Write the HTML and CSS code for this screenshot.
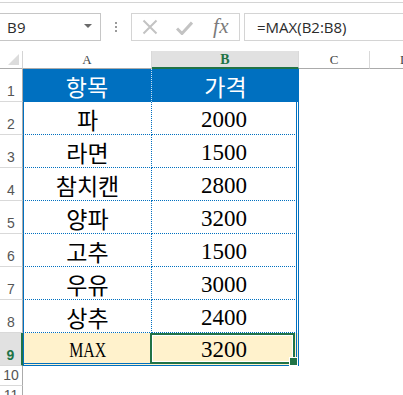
FILE: index.html
```html
<!DOCTYPE html>
<html lang="ko">
<head>
<meta charset="utf-8">
<title>Excel MAX</title>
<link rel="stylesheet" href="styles.css">
</head>
<body>
<div class="app">
  <div class="topbar"></div>
  <div class="formula-row">
    <div class="namebox"><span class="ref">B9</span><span class="caret"></span></div>
    <div class="grip"><i></i><i></i><i></i></div>
    <div class="fbuttons">
      <svg class="icon-x" width="16" height="16" viewBox="0 0 16 16"><path d="M1.5 1.5 L14.5 14.5 M14.5 1.5 L1.5 14.5" stroke="#c3c3c3" stroke-width="2" fill="none"/></svg>
      <svg class="icon-ok" width="17" height="14" viewBox="0 0 17 14"><path d="M1 7.5 L6 12.5 L16 1.5" stroke="#c3c3c3" stroke-width="3" fill="none"/></svg>
      <span class="fx">fx</span>
    </div>
    <div class="finput">=MAX(B2:B8)</div>
  </div>

  <div class="sheet">
    <div class="corner"><span class="tri"></span></div>
    <div class="ch">A</div>
    <div class="ch sel">B</div>
    <div class="ch">C</div>
    <div class="ch last">D</div>

    <div class="rh">1</div>
    <div class="c hd hda"><span class="kr">항목</span></div>
    <div class="c hd"><span class="kr">가격</span></div>
    <div class="c"></div><div class="c"></div>

    <div class="rh">2</div>
    <div class="c ta"><span class="kr">파</span></div>
    <div class="c tb"><span class="num">2000</span></div>
    <div class="c"></div><div class="c"></div>

    <div class="rh">3</div>
    <div class="c ta"><span class="kr">라면</span></div>
    <div class="c tb"><span class="num">1500</span></div>
    <div class="c"></div><div class="c"></div>

    <div class="rh">4</div>
    <div class="c ta"><span class="kr">참치캔</span></div>
    <div class="c tb"><span class="num">2800</span></div>
    <div class="c"></div><div class="c"></div>

    <div class="rh">5</div>
    <div class="c ta"><span class="kr">양파</span></div>
    <div class="c tb"><span class="num">3200</span></div>
    <div class="c"></div><div class="c"></div>

    <div class="rh">6</div>
    <div class="c ta"><span class="kr">고추</span></div>
    <div class="c tb"><span class="num">1500</span></div>
    <div class="c"></div><div class="c"></div>

    <div class="rh">7</div>
    <div class="c ta"><span class="kr">우유</span></div>
    <div class="c tb"><span class="num">3000</span></div>
    <div class="c"></div><div class="c"></div>

    <div class="rh">8</div>
    <div class="c ta"><span class="kr">상추</span></div>
    <div class="c tb"><span class="num">2400</span></div>
    <div class="c"></div><div class="c"></div>

    <div class="rh sel">9</div>
    <div class="c ta r9"><span class="max">MAX</span></div>
    <div class="c tb r9 active"><span class="num">3200</span></div>
    <div class="c"></div><div class="c"></div>

    <div class="rh">10</div>
    <div class="c"></div><div class="c"></div><div class="c"></div><div class="c"></div>

    <div class="rh">11</div>
    <div class="c"></div><div class="c"></div><div class="c"></div><div class="c"></div>
  </div>
</div>
</body>
</html>
```

FILE: styles.css
```css
* { box-sizing: border-box; }
html, body { margin: 0; padding: 0; background: #fff; }
body { width: 403px; height: 395px; overflow: hidden; font-family: "Liberation Sans", Arial, sans-serif; }

.app { width: 403px; }

.topbar { height: 3px; border-bottom: 1px solid #d4d4d4; }

.formula-row {
  height: 48px;
  display: flex;
  align-items: flex-start;
  padding-top: 10px;
}

.namebox {
  margin-left: -1px;
  width: 102px;
  height: 28px;
  border: 1px solid #c6c6c6;
  display: flex;
  align-items: center;
  justify-content: space-between;
  padding: 0 8px 0 7px;
}
.namebox .ref { font-family: "Open Sans", "Liberation Sans", sans-serif; font-size: 15px; color: #2b2b2b; letter-spacing: 0.2px; }
.namebox .caret {
  width: 0; height: 0;
  border-left: 4px solid transparent;
  border-right: 4px solid transparent;
  border-top: 4px solid #6a6a6a;
  margin-top: -2px;
}

.grip {
  width: 30px;
  height: 28px;
  display: flex;
  flex-direction: column;
  align-items: center;
  justify-content: center;
  gap: 2px;
}
.grip i { display: block; width: 2px; height: 2px; background: #9a9a9a; }

.fbuttons {
  width: 109px;
  height: 28px;
  border: 1px solid #d4d4d4;
  display: flex;
  align-items: center;
  padding-left: 10px;
}
.icon-x { margin-right: 18px; }
.icon-ok { margin-right: 20px; margin-top: 1px; }
.fx {
  font-family: "Liberation Serif", "Times New Roman", serif;
  font-style: italic;
  font-size: 21px;
  color: #7b7b7b;
  margin-top: -2px;
  letter-spacing: 0.5px;
}

.finput {
  margin-left: 4px;
  flex: 1;
  height: 28px;
  border: 1px solid #d4d4d4;
  border-right: none;
  padding-left: 12px;
  display: flex;
  align-items: center;
  font-family: "Open Sans", "Liberation Sans", sans-serif;
  font-size: 15px;
  color: #2b2b2b;
}

.sheet {
  display: grid;
  grid-template-columns: 23px 129px 147px 71px 33px;
  grid-template-rows: 18px repeat(9, 33px) 20px 20px;
}

.corner {
  border-right: 1px solid #d4d4d4;
  border-bottom: 1px solid #ababab;
  position: relative;
}
.corner .tri {
  position: absolute;
  right: 3px; bottom: 3px;
  width: 11px; height: 11px;
  background: #dcdcdc;
  clip-path: polygon(100% 0, 100% 100%, 0 100%);
}

.ch {
  border-right: 1px solid #d9d9d9;
  border-bottom: 1px solid #ababab;
  display: flex;
  align-items: center;
  justify-content: center;
  font-family: "Liberation Serif", serif;
  font-size: 13px;
  color: #444;
  padding-top: 1px;
}
.ch.last { border-right: none; justify-content: flex-start; padding-left: 30px; }
.ch.sel {
  background: #e1e1e1;
  border-bottom: 2px solid #217346;
  color: #217346;
  font-weight: bold;
  font-size: 14px;
}

.rh {
  border-right: 1px solid #ababab;
  border-bottom: 1px solid #d9d9d9;
  display: flex;
  align-items: flex-end;
  justify-content: center;
  padding-bottom: 2px;
  font-family: "Liberation Sans", sans-serif;
  font-size: 14px;
  color: #555;
}
.rh.sel {
  background: #e1e1e1;
  border-right: 2px solid #217346;
  color: #217346;
  font-weight: bold;
}

.c {
  display: flex;
  align-items: center;
  justify-content: center;
  background: #fff;
}

.hd { background: #0070c0; color: #fff; }
.hda { border-right: 1px dotted #cfe3f3; }

.ta {
  border-left: 1px solid #0070c0;
  border-right: 1px dotted #0070c0;
  border-bottom: 1px dotted #0070c0;
}
.tb {
  border-right: 3px double #0070c0;
  border-bottom: 1px dotted #0070c0;
}

.r9 { background: #fff2cc; border-bottom: 3px double #0070c0; }

.kr {
  font-family: "Noto Sans CJK KR", sans-serif;
  font-size: 23px;
  line-height: 1;
  color: #000;
  padding-top: 2px;
}
.hd .kr { color: #fff; }

.num {
  font-family: "Liberation Serif", "Times New Roman", serif;
  font-size: 23px;
  line-height: 1;
  color: #000;
  padding-top: 3px;
}

.max {
  display: inline-block;
  font-family: "Liberation Serif", "Times New Roman", serif;
  font-size: 22px;
  line-height: 1;
  color: #000;
  transform: scaleX(0.72);
  padding-top: 3px;
}

.active { position: relative; }
.active::after {
  content: "";
  position: absolute;
  left: -2px; right: 1px; top: 0; bottom: -1px;
  border: 2px solid #217346;
  box-shadow: inset 0 0 0 1px #fff;
}
.active::before {
  content: "";
  position: absolute;
  right: -2px; bottom: -3px;
  width: 7px; height: 7px;
  background: #217346;
  border: 1px solid #fff;
  z-index: 2;
}
```
